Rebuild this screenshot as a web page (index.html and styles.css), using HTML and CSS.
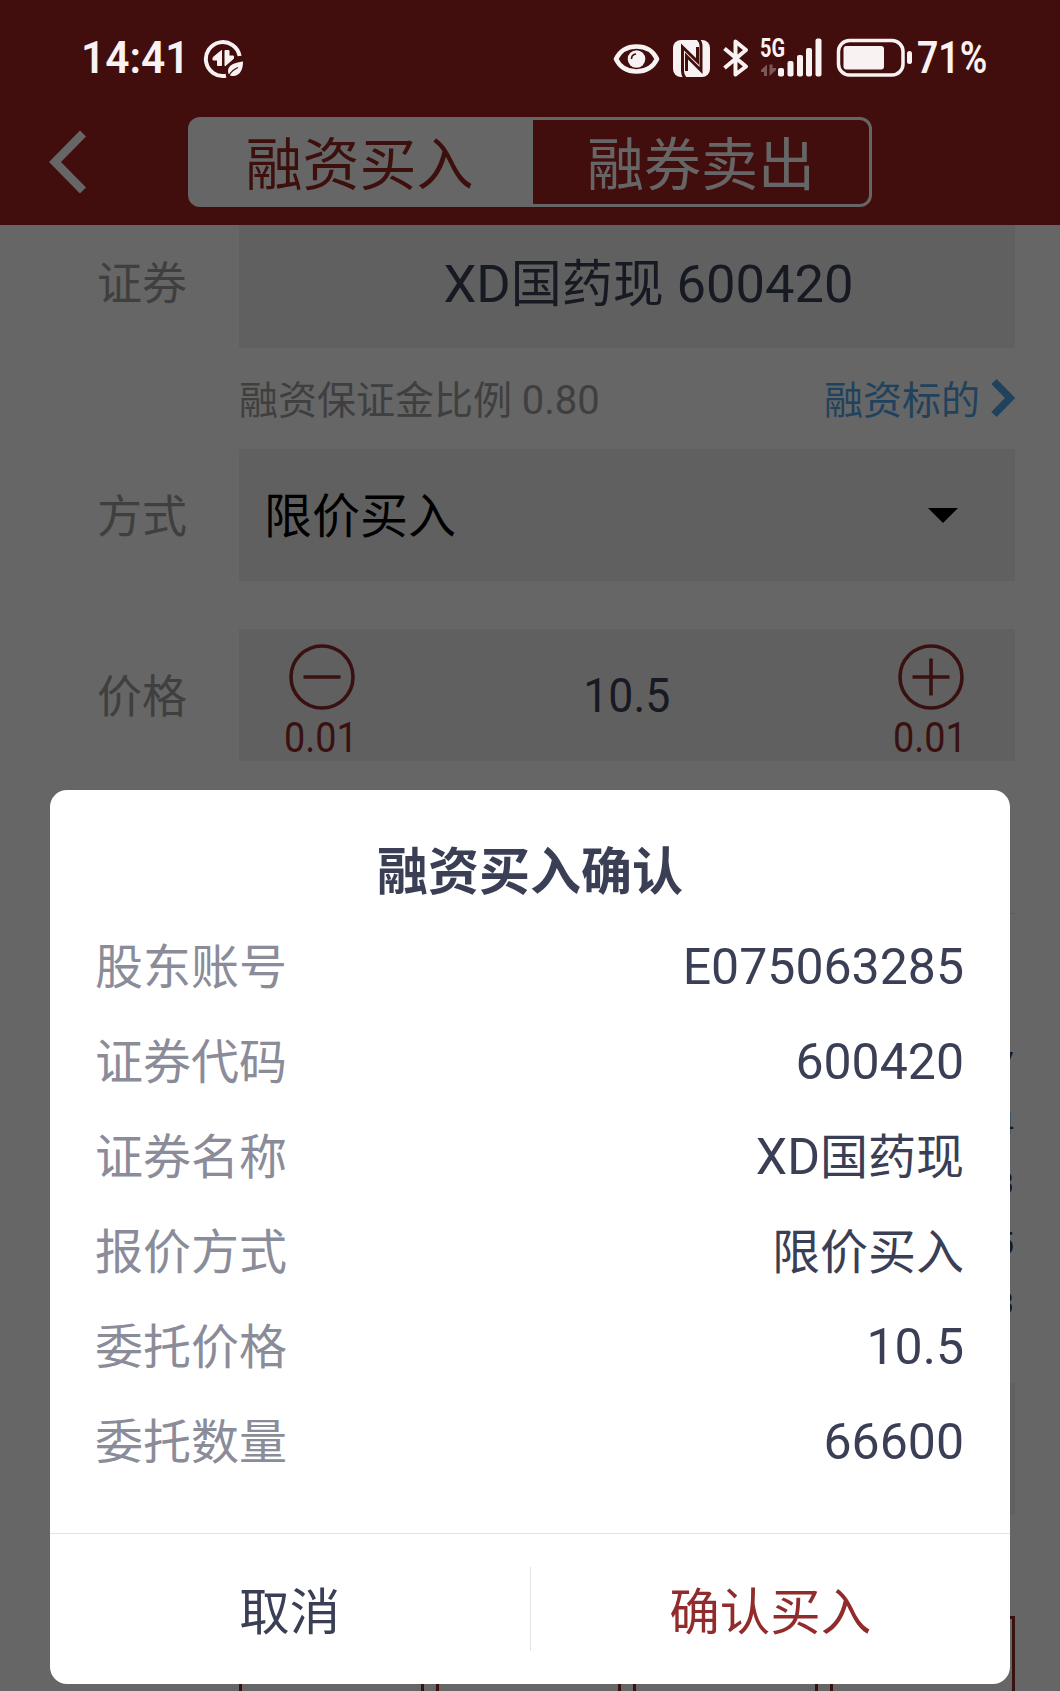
FILE: index.html
```html
<!DOCTYPE html>
<html lang="zh-CN">
<head>
<meta charset="utf-8">
<title>融资买入</title>
<link rel="stylesheet" href="styles.css">
</head>
<body>
<div class="phone">
  <div class="statusbar">
    <span class="clock">14:41</span>
    <svg class="saver" viewBox="203 38 42 42" width="42" height="42">
      <path d="M239.6 56 A17 17 0 1 0 226 75.8" fill="none" stroke="#f9f2f3" stroke-width="4"/>
      <path d="M221.5 65.500 V50.500 L213 57.500 V60 H217.500 V65.500 Z M225 50.500 V66 L233.500 58.500 V56 H229 V50.500 Z" fill="#f9f2f3" stroke="#f9f2f3" stroke-width="1" stroke-linejoin="round"/>
      <path d="M243 61.500 C234 63 228 65 228 71 C228 75 230 76.500 234 76 C240 75 243 70 243 61.500 Z" fill="#f9f2f3"/>
      <path d="M229 75.500 Q232 70 238 67.500" fill="none" stroke="#420f0d" stroke-width="1.200"/>
    </svg>
    <div class="indicators">
      <svg class="eye" viewBox="613 38 47 40" width="47" height="40">
        <path d="M616 59 Q622 46.500 636.500 46.500 T657 59 Q651 71.500 636.500 71.500 T616 59 Z" fill="none" stroke="#f9f2f3" stroke-width="4.600" stroke-linejoin="round"/>
        <circle cx="636.500" cy="59" r="8.800" fill="#f9f2f3"/>
        <path d="M631.500 59 Q631.500 54.500 636 54" fill="none" stroke="#420f0d" stroke-width="1.600"/>
      </svg>
      <svg class="nfc" viewBox="672 38 39 40" width="39" height="40">
        <rect x="673" y="40" width="37" height="37" rx="8" fill="#f9f2f3"/>
        <path d="M685 78 Q682.500 75 682.500 71 V47 L697.500 61.500 V47" fill="none" stroke="#420f0d" stroke-width="3"/>
        <path d="M698 39 Q701 42 701 46 V70.500 L686.500 56 V71" fill="none" stroke="#420f0d" stroke-width="3"/>
      </svg>
      <svg class="bt" viewBox="722 38 28 40" width="28" height="40">
        <path d="M724.500 48.500 L746 66.500 L735.500 74.500 V41.500 L746 50 L724.500 68" fill="none" stroke="#f9f2f3" stroke-width="4" stroke-linejoin="round"/>
      </svg>
      <svg class="signal" viewBox="759 29 64 49" width="64" height="49">
        <text x="760" y="56.500" textLength="25" lengthAdjust="spacingAndGlyphs" class="net">5G</text>
        <path d="M767 76 V64.500 L761 70 V72 H764 V76 Z M769.500 64.500 V76 L776 70 V68 H772.500 V64.500 Z" fill="#7d5758"/>
        <g fill="#f9f2f3">
          <rect x="778" y="68" width="6" height="8.500" rx="2"/>
          <rect x="787.500" y="61" width="6" height="15.500" rx="2"/>
          <rect x="797" y="55" width="6" height="21.500" rx="2"/>
          <rect x="806" y="48" width="6" height="28.500" rx="2"/>
          <rect x="815.500" y="38.500" width="6" height="38" rx="2"/>
        </g>
      </svg>
      <svg class="battery" viewBox="836 37 77 41" width="77" height="41">
        <rect x="838.500" y="40.500" width="64.500" height="34.500" rx="11" fill="none" stroke="#f9f2f3" stroke-width="3.500"/>
        <rect x="843.500" y="46" width="40.500" height="23.500" rx="3" fill="#f9f2f3"/>
        <rect x="907" y="51" width="5" height="13" rx="2.500" fill="#f9f2f3"/>
      </svg>
      <span class="percent">71%</span>
    </div>
  </div>

  <header class="navbar">
    <svg class="back" viewBox="0 0 38 64" width="38" height="64">
      <path d="M34 3.500 L6 32 L34 60.500" fill="none" stroke="#fff" stroke-width="8.500"/>
    </svg>
    <div class="segmented">
      <div class="segment active">融资买入</div>
      <div class="segment">融券卖出</div>
    </div>
  </header>

  <main class="form">
    <div class="row row-security">
      <label>证券</label>
      <div class="field security"><span class="num">XD</span>国药现 <span class="num">600420</span></div>
    </div>
    <div class="hint">
      <span>融资保证金比例 <span class="ratio">0.80</span></span>
      <a class="targets">融资标的
        <svg viewBox="0 0 24 40" width="24" height="40"><path d="M3 3.500 L19 20 L3 36.500" fill="none" stroke="#52a5e8" stroke-width="7.500"/></svg>
      </a>
    </div>
    <div class="row">
      <label>方式</label>
      <div class="field select"><span>限价买入</span><i class="caret"></i></div>
    </div>
    <div class="row row-price">
      <label>价格</label>
      <div class="field stepper">
        <div class="step">
          <svg viewBox="0 0 66 66" width="66" height="66"><path d="M14.500 33 H51.500" /><circle cx="33" cy="33" r="31"/></svg>
          <span>0.01</span>
        </div>
        <span class="price">10.5</span>
        <div class="step">
          <svg viewBox="0 0 66 66" width="66" height="66"><path d="M14.500 33 H51.500 M33 14.500 V51.500"/><circle cx="33" cy="33" r="31"/></svg>
          <span>0.01</span>
        </div>
      </div>
    </div>
    <div class="quotes">
      <span>7</span><span>4</span><span>3</span><span>5</span><span>3</span>
    </div>
    <div class="field quantity"></div>
    <div class="portions"><i></i><i></i><i></i><i></i></div>
  </main>

  <div class="overlay">
    <section class="dialog">
      <h1>融资买入确认</h1>
      <dl>
        <div><dt>股东账号</dt><dd class="num">E075063285</dd></div>
        <div><dt>证券代码</dt><dd class="num">600420</dd></div>
        <div><dt>证券名称</dt><dd><span class="latin">XD</span>国药现</dd></div>
        <div><dt>报价方式</dt><dd>限价买入</dd></div>
        <div><dt>委托价格</dt><dd class="num">10.5</dd></div>
        <div><dt>委托数量</dt><dd class="num">66600</dd></div>
      </dl>
      <footer>
        <div class="action">取消</div>
        <div class="action confirm">确认买入</div>
      </footer>
    </section>
  </div>
</div>
</body>
</html>
```
FILE: styles.css
```css
* { box-sizing: border-box; }
body {
  margin: 0;
  font-family: Roboto, "Noto Sans CJK SC", sans-serif;
}
.phone {
  position: relative;
  width: 1060px;
  height: 1691px;
  overflow: hidden;
  background: #fff;
}

/* system status bar */
.statusbar {
  position: absolute;
  inset: 0 0 auto 0;
  z-index: 2;
  height: 116px;
  padding: 37px 73px 0 81px;
  display: flex;
  align-items: flex-start;
  color: #f9f2f3;
  font-weight: 600;
  font-size: 44px;
  line-height: 43px;
}
.clock {
  width: 108px;
  transform: scaleX(0.965);
  transform-origin: left;
}
.saver { margin: 1px 0 0 14px; }
.indicators {
  display: flex;
  align-items: flex-start;
  margin-left: auto;
  width: 374px;
}
.indicators svg { flex: none; }
.eye { margin-top: 1px; }
.nfc { margin: 1px 0 0 12px; }
.bt { margin: 1px 0 0 11px; }
.signal { margin: -8px 0 0 9px; }
.battery { margin-left: 13px; }
.net { font-size: 25px; font-weight: 700; fill: #f9f2f3; }
.percent {
  margin-left: 4px;
  transform: scaleX(0.85);
  transform-origin: left;
}

/* navigation */
.navbar {
  height: 225px;
  padding: 117px 0 0 49px;
  display: flex;
  background: #a52521;
}
.back { margin-top: 13px; }
.segmented {
  margin-left: 101px;
  width: 684px;
  height: 90px;
  display: flex;
  border: 3px solid #fff;
  border-radius: 12px;
  background: #fff;
  overflow: hidden;
}
.segment {
  flex: 1;
  background: #a52521;
  color: #fff;
  font-size: 57px;
  line-height: 91px;
  text-align: center;
}
.segment.active {
  flex: 0 0 342px;
  padding-right: 5px;
  background: #fff;
  color: #982923;
}

/* order form */
.form { padding: 0 45px 0 97px; color: #9e9e9e; }
.row { display: flex; height: 132px; align-items: center; }
.row label { width: 142px; padding-bottom: 4px; font-size: 45px; }
.field { flex: 1; height: 132px; background: #f1f1f1; color: #3a4155; }
.row-security { height: 123px; }
.security {
  height: 123px;
  padding-left: 43px;
  font-size: 51px;
  line-height: 119px;
  text-align: center;
}
.security .num { font-size: 52.5px; line-height: 1; }
.row-security label { padding: 0; line-height: 119px; align-self: flex-start; }
.hint {
  height: 101px;
  margin-left: 142px;
  padding-bottom: 4px;
  display: flex;
  justify-content: space-between;
  align-items: center;
  font-size: 39px;
}
.ratio { font-size: 40px; line-height: 1; }
.targets { display: flex; align-items: center; gap: 11px; color: #52a5e8; }
.targets svg { margin-top: 3px; }
.select {
  display: flex;
  align-items: center;
  justify-content: space-between;
  padding: 0 57px 0 25px;
  color: #000;
  font-size: 48px;
}
.select span { padding-bottom: 6px; }
.caret {
  border: 15px solid transparent;
  border-top-color: #000;
  border-bottom: 0;
}
.row-price { margin-top: 48px; }
.stepper {
  display: flex;
  justify-content: space-between;
  padding: 15px 45px 0 44px;
}
.step {
  width: 78px;
  display: flex;
  flex-direction: column;
  align-items: center;
  color: #922b2b;
  font-size: 42px;
  line-height: 56px;
}
.step svg { flex: none; fill: none; stroke: #922b2b; stroke-width: 3.6; }
.step span { white-space: nowrap; transform: translateX(-1px) scaleX(0.9); }
.price { font-size: 48px; line-height: 104px; transform: scaleX(0.93); }
.quotes {
  margin: 152px 0 0 142px;
  padding: 120px 1px 0 0;
  border-top: 1px solid #e4e4e4;
  display: flex;
  flex-direction: column;
  align-items: flex-end;
  font-size: 31px;
  line-height: 60px;
  color: #3a4155;
}
.quantity { margin: 49px 0 0 142px; }
.portions {
  margin: 101px 0 0 142px;
  display: grid;
  grid-template-columns: repeat(4, 1fr);
  gap: 12px;
}
.portions i { height: 100px; border: 3px solid #922b2b; }

/* confirmation dialog */
.overlay {
  position: absolute;
  inset: 0;
  padding: 790px 50px 0;
  background: rgba(0, 0, 0, 0.6);
}
.dialog {
  height: 894px;
  display: flex;
  flex-direction: column;
  border-radius: 17px;
  background: #fff;
  color: #3a3f55;
}
.dialog h1 {
  margin: 0;
  padding-top: 43px;
  font-size: 51px;
  line-height: 80px;
  font-weight: 700;
  text-align: center;
}
.dialog dl { margin: 5px 46px 0 45px; }
.dialog dl div {
  display: flex;
  justify-content: space-between;
  align-items: center;
  height: 95px;
  font-size: 48px;
}
.dialog dt { padding-bottom: 5px; color: #8b8c99; }
.dialog dd { margin: 0; padding-bottom: 6px; }
.dialog dd.num { padding: 2px 0 0; font-size: 50px; }
.latin { font-size: 50px; line-height: 1; }
.dialog footer {
  height: 151px;
  margin-top: auto;
  display: flex;
  align-items: center;
  border-top: 1px solid #e3e3e5;
}
.action {
  flex: 1;
  height: 84px;
  font-size: 50.5px;
  line-height: 92px;
  text-align: center;
}
.confirm { border-left: 1px solid #e3e3e5; color: #922b2b; }
```
